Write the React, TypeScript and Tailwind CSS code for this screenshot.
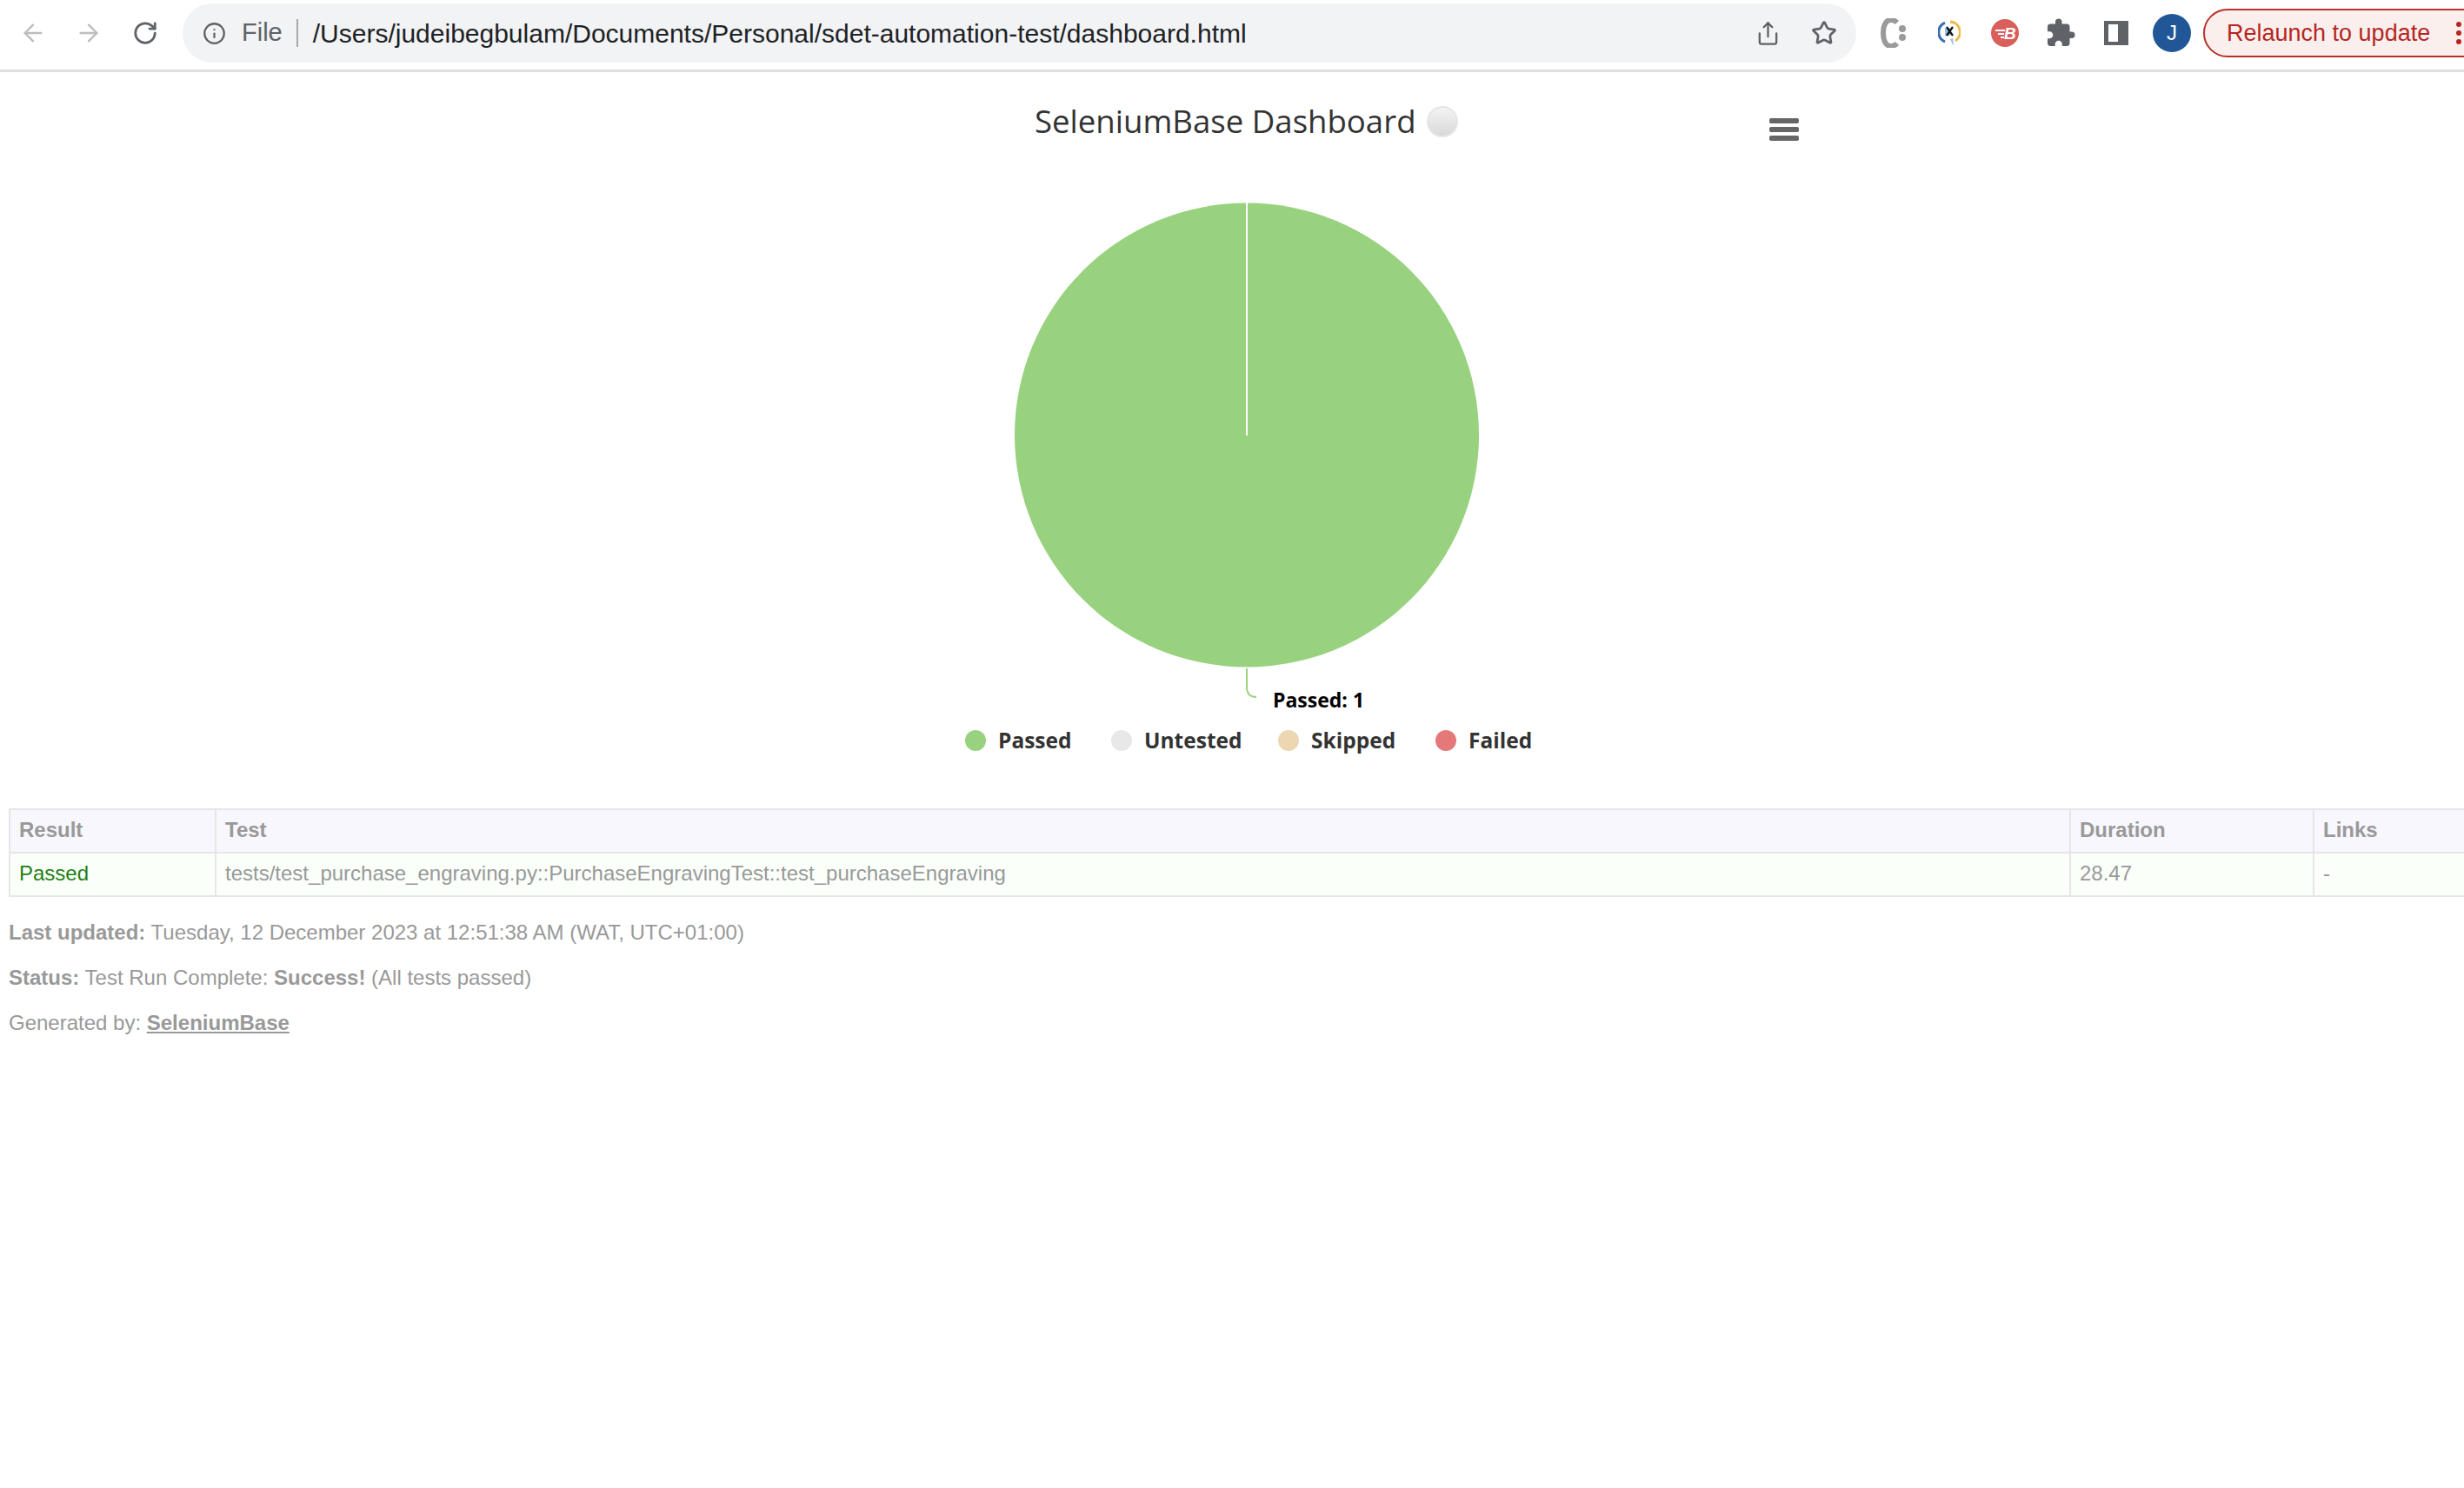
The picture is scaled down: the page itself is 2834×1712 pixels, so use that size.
import { ArrowLeft, ArrowRight, Info, RotateCw, Share, Star } from 'lucide-react';
import { MdExtension } from 'react-icons/md';

const sans = "font-['Liberation_Sans',Arial,sans-serif]";
const legendFont = "'Open Sans', 'DejaVu Sans', sans-serif";

function CitrusIcon() {
  return (
    <svg width="30" height="34" viewBox="0 0 30 34">
      <path d="M19 5 C16 2 11 1 8 3 C4 6 3 11 3 17 C3 23 4 28 8 31 C11 33 16 32 19 29" fill="none" stroke="#9a9a9a" strokeWidth="6" />
      <circle cx="25" cy="12" r="4" fill="#9a9a9a" />
      <circle cx="25" cy="22" r="4" fill="#9a9a9a" />
    </svg>
  );
}

function RingIcon() {
  return (
    <svg width="26" height="30" viewBox="0 0 26 30">
      <path d="M8 3 A12 12 0 0 0 8 25" fill="none" stroke="#3b6db5" strokeWidth="3" />
      <path d="M14 2 A12 12 0 0 1 20 24" fill="none" stroke="#eeb84a" strokeWidth="3" />
      <path d="M14 22 l4 8 -1 -9z" fill="#9ab8d8" />
      <rect x="8" y="9" width="6" height="9" fill="#8cc4e8" />
      <path d="M10 8 L17 18 M17 8 L10 18" stroke="#111" strokeWidth="2.2" />
    </svg>
  );
}

function BoltIcon() {
  return (
    <svg width="32" height="32" viewBox="0 0 32 32">
      <circle cx="16" cy="16" r="16" fill="#d95f5b" />
      <path d="M5 13 H16 M8 17 H15 M11 21 H15" stroke="#fff" strokeWidth="2" />
      <text x="15" y="23" fill="#fff" fontSize="19" fontWeight="700" fontStyle="italic" fontFamily="'Liberation Sans', sans-serif">B</text>
    </svg>
  );
}

function Toolbar() {
  return (
    <div className={`flex h-[83px] w-[2834px] items-start overflow-hidden border-b-[3px] border-[#dfdfdf] bg-white ${sans}`}>
      <div className="flex h-[76px] w-[210px] shrink-0 items-center pl-[22px] text-[#bdbdbd]">
        <ArrowLeft size={32} strokeWidth={1.8} />
        <ArrowRight size={32} strokeWidth={1.8} className="ml-[32px]" />
        <RotateCw size={30} strokeWidth={2.2} className="ml-[34px] text-[#5f6368]" />
      </div>
      <div className="mt-[4px] flex h-[68px] w-[1925px] shrink-0 items-center rounded-full bg-[#f1f3f4] pl-[23px]">
        <Info size={27} strokeWidth={2} className="text-[#5f6368]" />
        <span className="ml-[18px] text-[29px] text-[#5f6368]">File</span>
        <span className="ml-[16px] h-[32px] w-[2px] bg-[#a8a8a8]" />
        <span className="ml-[17px] text-[30px] text-[#202124]">/Users/judeibegbulam/Documents/Personal/sdet-automation-test/dashboard.html</span>
        <Share size={29} strokeWidth={1.9} className="ml-auto text-[#5f6368]" />
        <Star size={30} strokeWidth={2.2} className="ml-[35px] mr-[22px] text-[#5f6368]" />
      </div>
      <div className="flex h-[76px] shrink-0 items-center">
        <span className="ml-[28px] flex"><CitrusIcon /></span>
        <span className="ml-[36px] flex"><RingIcon /></span>
        <span className="ml-[35px] flex"><BoltIcon /></span>
        <MdExtension size={36} className="ml-[30px] text-[#5f6368]" />
        <span className="ml-[32px] h-[28px] w-[28px] border-y-[4px] border-l-[5px] border-r-[12px] border-[#5f6368]" />
        <span className="ml-[28px] flex h-[44px] w-[44px] items-center justify-center rounded-full bg-[#225797] text-[24px] text-white">J</span>
        <div className="ml-[14px] flex h-[56px] w-[340px] shrink-0 items-center rounded-l-full border-2 border-[#b5322a] bg-[#fbefee] pl-[25px] text-[27px] text-[#b5261e]">
          Relaunch to update
          <span className="ml-[30px] flex flex-col gap-[4px]">
            <span className="h-[6px] w-[6px] rounded-full bg-[#b5261e]" />
            <span className="h-[6px] w-[6px] rounded-full bg-[#b5261e]" />
            <span className="h-[6px] w-[6px] rounded-full bg-[#b5261e]" />
          </span>
        </div>
      </div>
    </div>
  );
}

function Chart() {
  const legend = [
    { name: 'Passed', cx: 1122, x: 1148, color: '#98d27f' },
    { name: 'Untested', cx: 1290, x: 1316, color: '#e8e8e8' },
    { name: 'Skipped', cx: 1482, x: 1508, color: '#ecd7b3' },
    { name: 'Failed', cx: 1663, x: 1689, color: '#e57878' },
  ];
  return (
    <svg className="block h-[847px] w-[2834px]" viewBox="0 83 2834 847">
      <defs>
        <linearGradient id="orb" x1="0" y1="0" x2="0" y2="1">
          <stop offset="0" stopColor="#f4f4f4" />
          <stop offset="1" stopColor="#d8d8d8" />
        </linearGradient>
      </defs>
      <text x="1190" y="153" fontSize="36.6" fill="#333" fontFamily={legendFont}>SeleniumBase Dashboard</text>
      <circle cx="1659" cy="140" r="17" fill="url(#orb)" stroke="#e6e6e6" strokeWidth="2" />
      <rect x="2035" y="136" width="34" height="6" rx="2" fill="#666" />
      <rect x="2035" y="146" width="34" height="6" rx="2" fill="#666" />
      <rect x="2035" y="156" width="34" height="6" rx="2" fill="#666" />

      <circle cx="1434" cy="500.5" r="267" fill="#98d27f" />
      <rect x="1433" y="233" width="2" height="268" fill="#fff" />
      <path d="M1434 769 V790 Q1434 802 1445 802" fill="none" stroke="#98d27f" strokeWidth="2" />
      <text x="1464" y="814" fontSize="23" fontWeight="700" fill="#000" fontFamily={legendFont}>Passed: 1</text>

      {legend.map((item) => (
        <g key={item.name}>
          <circle cx={item.cx} cy="852" r="12" fill={item.color} />
          <text x={item.x} y="861" fontSize="24.5" fontWeight="700" fill="#333" fontFamily={legendFont}>{item.name}</text>
        </g>
      ))}
    </svg>
  );
}

function ResultsTable() {
  const th = 'border-2 border-[#e6e6e6] px-[10px] pb-[2px] text-left font-bold';
  const td = 'border-2 border-[#e6e6e6] px-[10px] pb-[2px] font-normal';
  return (
    <table className="ml-[10px] w-[2890px] table-fixed border-collapse text-[24px] text-[#999]">
      <colgroup>
        <col className="w-[237px]" />
        <col className="w-[2133px]" />
        <col className="w-[280px]" />
        <col />
      </colgroup>
      <thead>
        <tr className="h-[50px] bg-[#f7f7fd]">
          <th className={th}>Result</th>
          <th className={th}>Test</th>
          <th className={th}>Duration</th>
          <th className={th}>Links</th>
        </tr>
      </thead>
      <tbody>
        <tr className="h-[50px] bg-[#fafffa]">
          <td className={`${td} text-[#1f7f14]`}>Passed</td>
          <td className={td}>tests/test_purchase_engraving.py::PurchaseEngravingTest::test_purchaseEngraving</td>
          <td className={td}>28.47</td>
          <td className={td}>-</td>
        </tr>
      </tbody>
    </table>
  );
}

export default function App() {
  return (
    <div className={`h-[1712px] w-[2834px] overflow-hidden bg-white ${sans}`}>
      <Toolbar />
      <Chart />
      <ResultsTable />
      <div className="ml-[10px] mt-[27px] flex flex-col gap-[24px] text-[24px] leading-[28px] text-[#999]">
        <p><b>Last updated:</b> Tuesday, 12 December 2023 at 12:51:38 AM (WAT, UTC+01:00)</p>
        <p><b>Status:</b> Test Run Complete: <b>Success!</b> (All tests passed)</p>
        <p>Generated by: <a className="font-bold underline">SeleniumBase</a></p>
      </div>
    </div>
  );
}
